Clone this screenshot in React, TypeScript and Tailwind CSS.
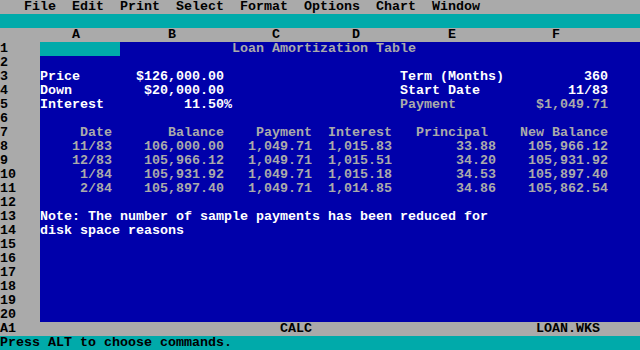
type Seg = [number, string, "w" | "g" | "k"];

const GRAY = "text-[#aaaaaa]";

function Line({ segs, offset = 0 }: { segs: Seg[]; offset?: number }) {
  let col = offset;
  const out: React.ReactNode[] = [];
  segs.forEach(([at, text, c], i) => {
    const pad = " ".repeat(Math.max(0, at - col));
    col = at + text.length;
    const cls = c === "w" ? "text-white" : c === "g" ? GRAY : "text-black";
    out.push(
      <span key={i} className={cls}>
        {pad}
        {text}
      </span>
    );
  });
  return <>{out}</>;
}

const rows: Record<number, Seg[]> = {
  3: [
    [5, "Price", "w"],
    [17, "$126,000.00", "w"],
    [50, "Term (Months)", "w"],
    [73, "360", "w"],
  ],
  4: [
    [5, "Down", "w"],
    [18, "$20,000.00", "w"],
    [50, "Start Date", "w"],
    [71, "11/83", "w"],
  ],
  5: [
    [5, "Interest", "w"],
    [23, "11.50%", "w"],
    [50, "Payment", "g"],
    [67, "$1,049.71", "g"],
  ],
  7: [
    [10, "Date", "g"],
    [21, "Balance", "g"],
    [32, "Payment", "g"],
    [41, "Interest", "g"],
    [52, "Principal", "g"],
    [65, "New Balance", "g"],
  ],
  13: [[5, "Note: The number of sample payments has been reduced for", "w"]],
  14: [[5, "disk space reasons", "w"]],
};

const data = [
  ["11/83", "106,000.00", "1,015.83", "33.88", "105,966.12"],
  ["12/83", "105,966.12", "1,015.51", "34.20", "105,931.92"],
  ["1/84", "105,931.92", "1,015.18", "34.53", "105,897.40"],
  ["2/84", "105,897.40", "1,014.85", "34.86", "105,862.54"],
];

data.forEach((d, i) => {
  rows[8 + i] = [
    [14 - d[0].length, d[0], "g"],
    [28 - d[1].length, d[1], "g"],
    [31, "1,049.71", "g"],
    [41, d[2], "g"],
    [62 - d[3].length, d[3], "g"],
    [76 - d[4].length, d[4], "g"],
  ];
});

export default function App() {
  const nums = Array.from({ length: 20 }, (_, i) => i + 1);
  return (
    <div className="w-[640px] h-[350px] overflow-hidden bg-[#0000aa] font-['Liberation_Mono',monospace] font-bold text-[13.33px] leading-[14px] whitespace-pre">
      <div className="h-[14px] bg-[#aaaaaa] text-black">
        {"   File  Edit  Print  Select  Format  Options  Chart  Window"}
      </div>
      <div className="h-[14px] bg-[#00aaaa]" />
      <div className="h-[14px] bg-[#aaaaaa] text-black">
        <Line
          segs={[
            [9, "A", "k"],
            [21, "B", "k"],
            [34, "C", "k"],
            [44, "D", "k"],
            [56, "E", "k"],
            [69, "F", "k"],
          ]}
        />
      </div>
      {nums.map((n) => (
        <div key={n} className="flex h-[14px]">
          <div className="w-[40px] shrink-0 bg-[#aaaaaa] text-black">{n}</div>
          <div className="flex-1">
            {n === 1 ? (
              <>
                <span className="inline-block w-[80px] h-[14px] bg-[#00aaaa] align-top" />
                <Line segs={[[29, "Loan Amortization Table", "g"]]} offset={15} />
              </>
            ) : (
              <Line segs={rows[n] ?? []} offset={5} />
            )}
          </div>
        </div>
      ))}
      <div className="h-[14px] bg-[#aaaaaa] text-black">
        <Line
          segs={[
            [0, "A1", "k"],
            [35, "CALC", "k"],
            [67, "LOAN.WKS", "k"],
          ]}
        />
      </div>
      <div className="h-[14px] bg-[#00aaaa] text-black">Press ALT to choose commands.</div>
    </div>
  );
}
